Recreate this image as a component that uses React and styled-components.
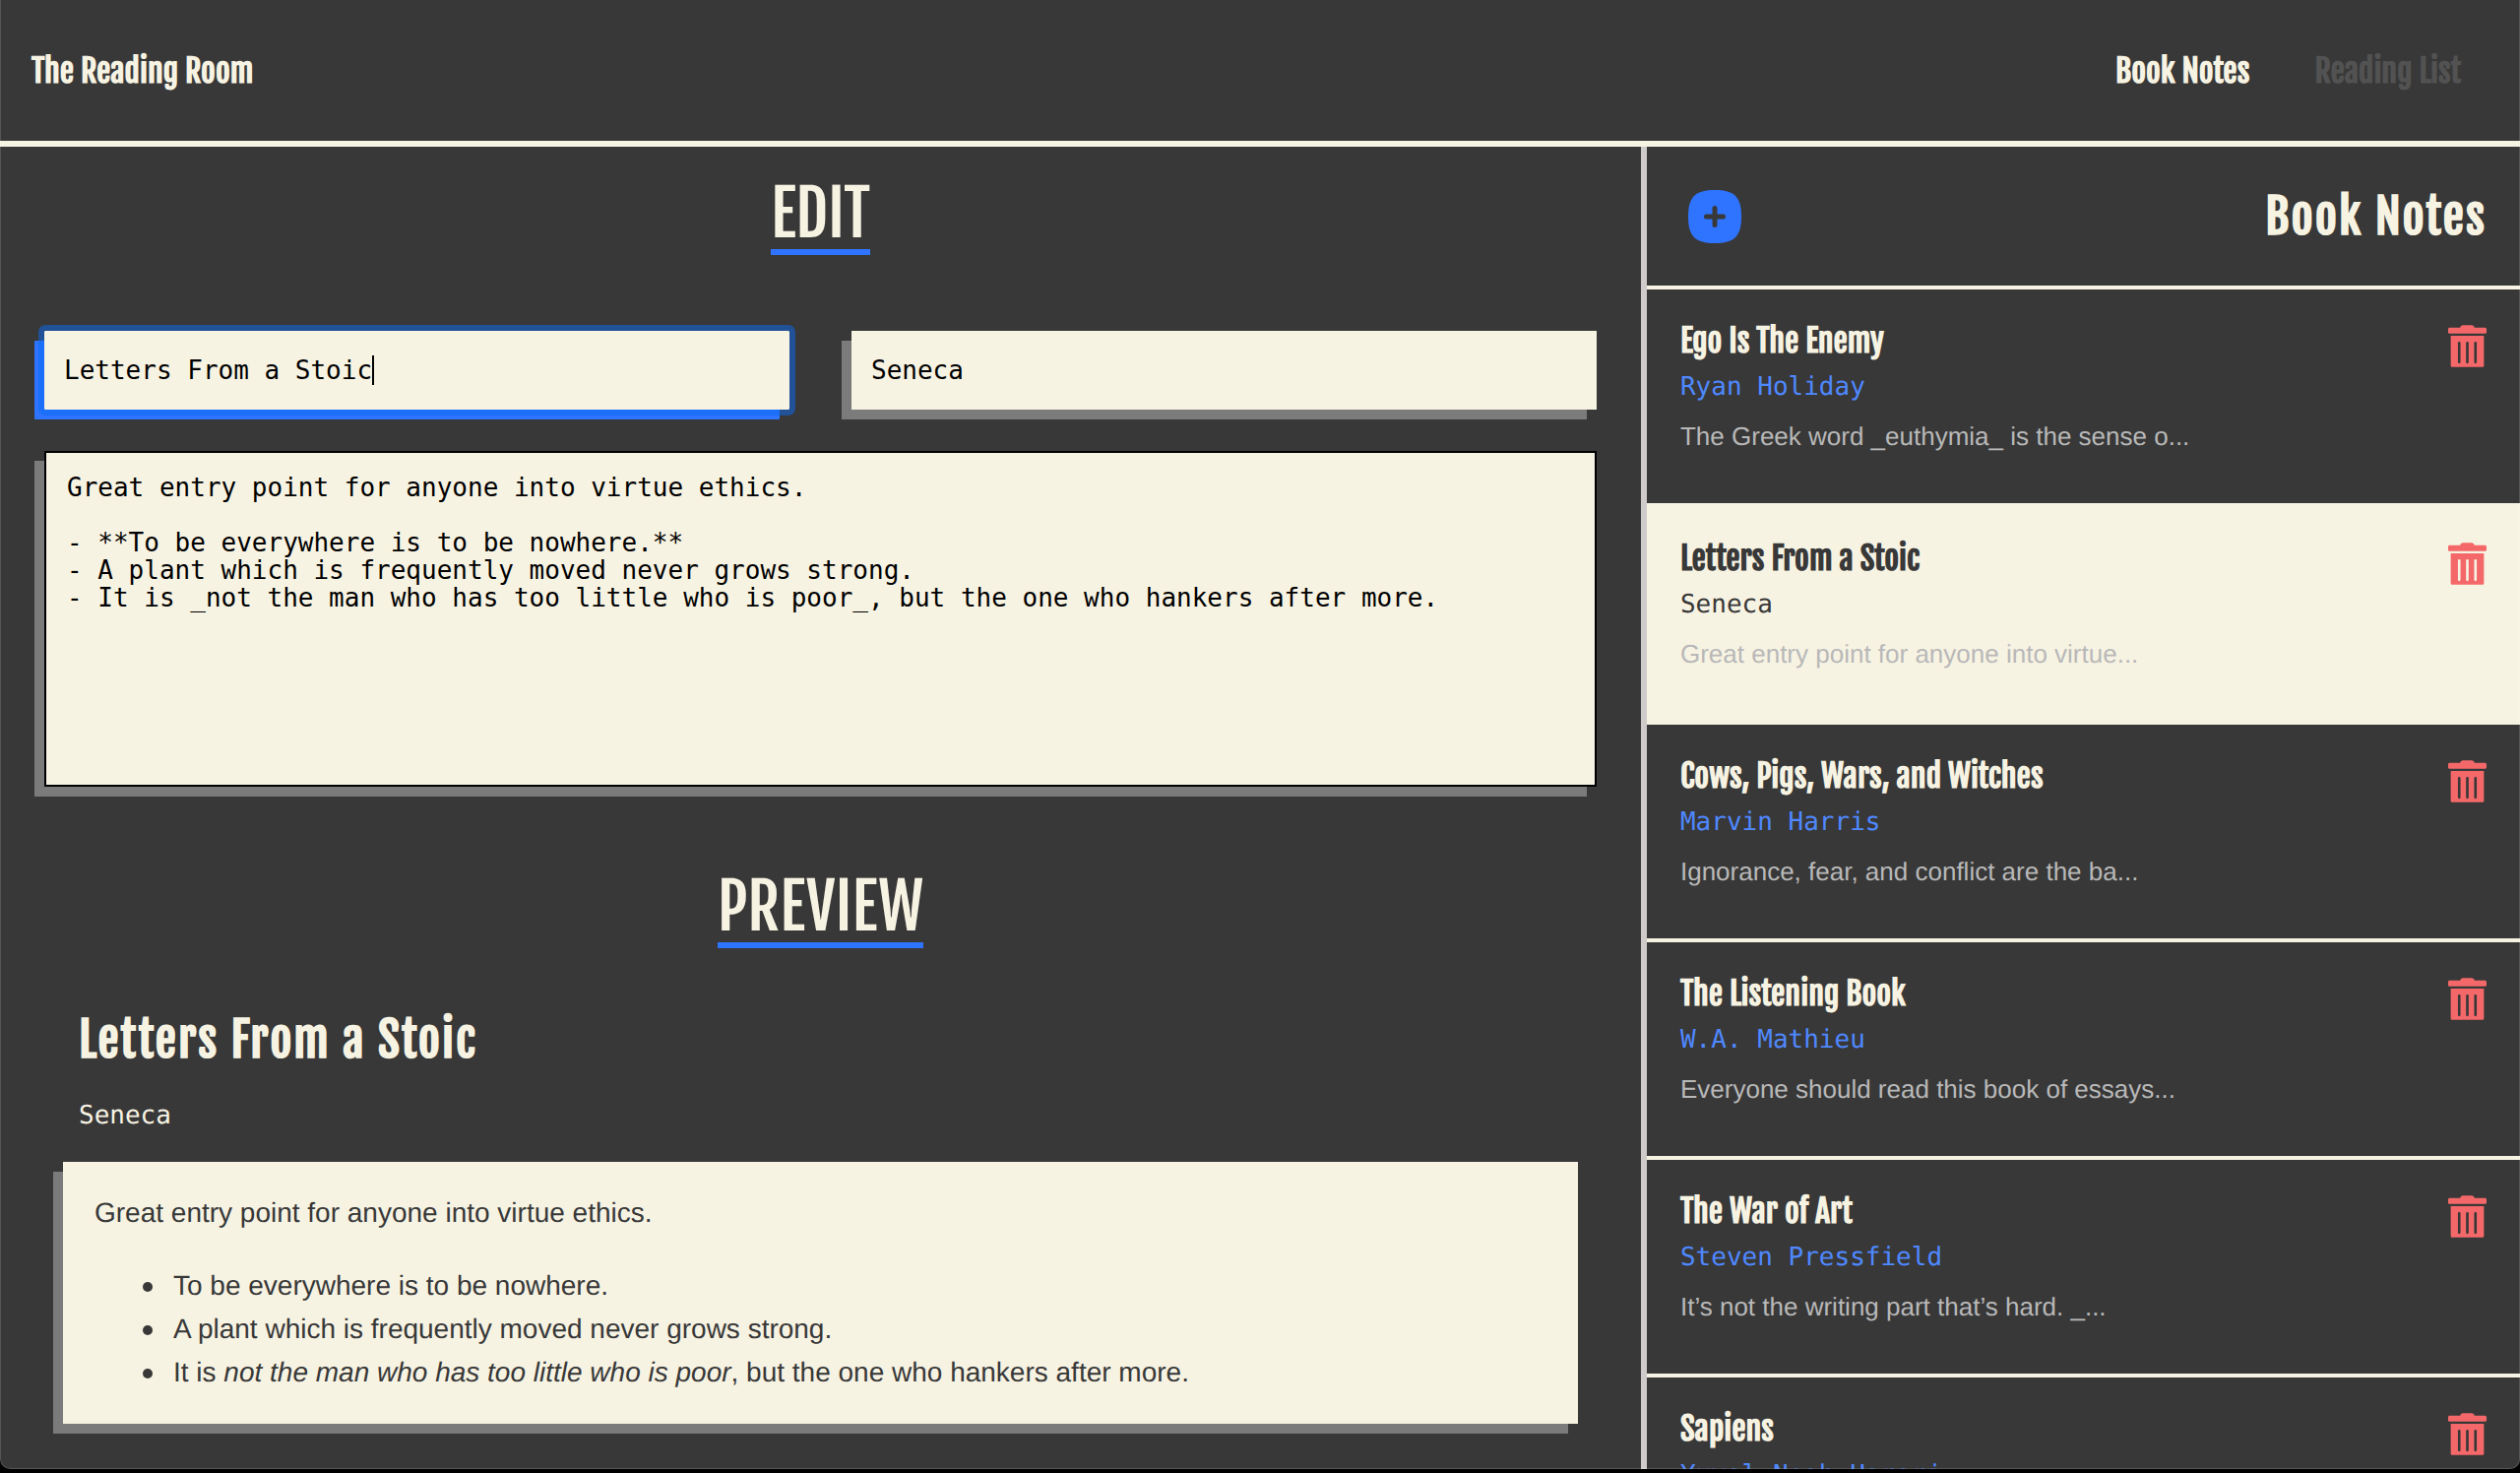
import React, { useLayoutEffect, useRef, useState } from "react";
import styled, { createGlobalStyle, ThemeProvider } from "styled-components";

const theme = {
  dark: "#383838",
  cream: "#f7f3e3",
  blue: "#2f74ff",
  lightBlue: "#4f88ff",
  red: "#f46869",
  shadow: "#7b7b7b",
  divider: "#cfcbcb",
  muted: "#b8b8b8",
  disabled: "#525252",
  display: `"Fjalla One", Oswald, "Liberation Sans", sans-serif`,
  mono: `Menlo, "DejaVu Sans Mono", "Liberation Mono", monospace`,
  body: `"Helvetica Neue", "Liberation Sans", Arial, sans-serif`,
};

const GlobalStyle = createGlobalStyle`
  *, *::before, *::after { box-sizing: border-box; }
  body {
    margin: 0;
    background: #000;
    color: ${theme.cream};
    font-family: ${theme.body};
    text-rendering: geometricPrecision;
    -webkit-font-smoothing: antialiased;
  }
  h1, h2, h3, p, ul { margin: 0; padding: 0; }
`;

const Window = styled.div`
  position: relative;
  display: flex;
  flex-direction: column;
  height: calc(100vh - 4px);
  overflow: hidden;
  border-radius: 0 0 10px 10px;
  background: ${({ theme }) => theme.dark};

  &::after {
    content: "";
    position: absolute;
    inset: 0;
    border: 1px solid rgba(255, 255, 255, 0.15);
    border-top: 0;
    border-radius: inherit;
    pointer-events: none;
  }
`;

const Header = styled.header`
  display: flex;
  flex: none;
  align-items: center;
  justify-content: space-between;
  min-height: 149px;
  padding: 0 60px 0 32px;
  border-bottom: 6px solid ${({ theme }) => theme.cream};
  font-family: ${({ theme }) => theme.display};
  font-size: 32px;
  font-weight: 700;
  line-height: 40px;
`;

const Nav = styled.nav`
  display: flex;
  gap: 66px;
`;

const NavLink = styled.a`
  color: ${({ theme, $active }) => ($active ? theme.cream : theme.disabled)};
  text-decoration: none;
`;

const Columns = styled.div`
  display: grid;
  flex: 1;
  grid-template-columns: minmax(0, 28fr) minmax(0, 15fr);
  min-height: 0;
`;

const Workspace = styled.main`
  display: flex;
  flex-direction: column;
  gap: 86px;
  padding-top: 32px;
  overflow: hidden;
`;

const Section = styled.section`
  display: flex;
  flex-direction: column;
  padding: 0 ${({ $inset }) => $inset}px;
`;

const SectionTitle = styled.h1`
  align-self: center;
  border-bottom: 6px solid ${({ theme }) => theme.blue};
  font-family: ${({ theme }) => theme.display};
  font-size: 64px;
  font-weight: 400;
  line-height: 72px;
  text-transform: uppercase;
`;

const Form = styled.form`
  display: grid;
  grid-template-columns: 1fr 1fr;
  gap: 42px 63px;
  margin-top: 77px;
`;

const FieldFrame = styled.div`
  position: relative;
  font-family: ${({ theme }) => theme.mono};
  font-size: 26px;
`;

const Caret = styled.span`
  position: absolute;
  top: 25px;
  width: 2px;
  height: 30px;
  background: #000;
  pointer-events: none;
`;

const TextField = styled.input`
  display: block;
  width: 100%;
  height: 80px;
  padding: 0 20px;
  border: 0;
  border-radius: 0;
  background: ${({ theme }) => theme.cream};
  box-shadow: -10px 10px 0 ${({ theme }) => theme.shadow};
  color: #000;
  caret-color: transparent;
  font: inherit;

  &:focus {
    border-radius: 1px;
    outline: 6px solid rgba(10, 105, 244, 0.5);
    box-shadow: -10px 10px 0 ${({ theme }) => theme.blue};
  }
`;

const NoteField = styled.textarea`
  display: block;
  grid-column: 1 / -1;
  height: 341px;
  padding: 21px;
  border: 2px solid #000;
  border-radius: 0;
  outline: 0;
  background: ${({ theme }) => theme.cream};
  box-shadow: -10px 10px 0 ${({ theme }) => theme.shadow};
  color: #000;
  font-family: ${({ theme }) => theme.mono};
  font-size: 26px;
  line-height: 28px;
  resize: none;
`;

const PreviewHead = styled.div`
  display: flex;
  flex-direction: column;
  gap: 32px;
  margin-top: 63px;
  padding: 0 16px 32px;
`;

const Title = styled.h2`
  font-family: ${({ theme }) => theme.display};
  font-size: 48px;
  font-weight: 700;
  letter-spacing: 2px;
  line-height: 60px;
`;

const Author = styled.p`
  color: ${({ theme, $tone }) => theme[$tone]};
  font-family: ${({ theme }) => theme.mono};
  font-size: 26px;
  line-height: 30px;
`;

const Paper = styled.article`
  padding: 30px 32px;
  background: ${({ theme }) => theme.cream};
  box-shadow: -10px 10px 0 ${({ theme }) => theme.shadow};
  color: ${({ theme }) => theme.dark};
  font-size: 28px;
  font-weight: 300;
  line-height: 44px;
`;

const Bullets = styled.ul`
  && {
    margin-top: 30px;
    padding-left: 80px;
  }
  list-style: none;
`;

const Bullet = styled.li`
  position: relative;

  &::before {
    content: "";
    position: absolute;
    top: 18px;
    left: -31px;
    width: 10px;
    height: 10px;
    border-radius: 50%;
    background: currentColor;
  }
`;

const Strong = styled.strong`
  font-weight: 500;
`;

const Sidebar = styled.aside`
  overflow: hidden;
  border-left: 6px solid ${({ theme }) => theme.divider};
`;

const SidebarHead = styled.div`
  display: flex;
  align-items: center;
  justify-content: space-between;
  min-height: 145px;
  padding: 0 34px 0 42px;
  border-bottom: 4px solid ${({ theme }) => theme.cream};
`;

const IconButton = styled.button`
  display: block;
  flex: none;
  padding: 0;
  border: 0;
  background: none;
  color: ${({ theme, $tone }) => theme[$tone]};
  cursor: pointer;

  svg { display: block; }
`;

const NoteList = styled.ul`
  list-style: none;
`;

const NoteItem = styled.li`
  display: flex;
  align-items: flex-start;
  justify-content: space-between;
  padding: 32px 34px 53px;
  border-bottom: 4px solid ${({ theme }) => theme.cream};
  background: ${({ theme, $selected }) => ($selected ? theme.cream : theme.dark)};
  color: ${({ theme, $selected }) => ($selected ? theme.dark : theme.cream)};

  ${IconButton} { margin-top: 4px; }
`;

const NoteTitle = styled.h3`
  && { margin-bottom: 12px; }
  font-family: ${({ theme }) => theme.display};
  font-size: 32px;
  font-weight: 700;
  line-height: 40px;
`;

const Excerpt = styled.p`
  && { margin-top: 20px; }
  color: ${({ theme }) => theme.muted};
  font-size: 26px;
  font-weight: 300;
  line-height: 30px;
`;

const AddIcon = () => (
  <svg width="54" height="54" viewBox="0 0 54 54" aria-hidden="true">
    <path
      fill="currentColor"
      d="M27 0C47 0 54 7 54 27S47 54 27 54 0 47 0 27 7 0 27 0Z"
    />
    <path
      d="M27 18.5v17M18.5 27h17"
      fill="none"
      stroke="#383838"
      strokeLinecap="round"
      strokeWidth="5"
    />
  </svg>
);

const TrashIcon = () => (
  <svg width="39" height="43" viewBox="0 0 118 129" aria-hidden="true">
    <g fill="currentColor">
      <path d="M37 8C38 3 41 0 46 0h26c5 0 8 3 9 8h32c3 0 5 2 5 5v9c0 3-2 4-5 4H5c-3 0-5-1-5-4v-9c0-3 2-5 5-5Z" />
      <path
        fillRule="evenodd"
        d="M8 33h102v91c0 3-2 5-5 5H13c-3 0-5-2-5-5Zm22 22v59a4 4 0 0 0 8 0V55a4 4 0 0 0-8 0Zm25 0v59a4 4 0 0 0 8 0V55a4 4 0 0 0-8 0Zm25 0v59a4 4 0 0 0 8 0V55a4 4 0 0 0-8 0Z"
      />
    </g>
  </svg>
);

const notes = [
  { title: "Ego Is The Enemy", author: "Ryan Holiday", excerpt: "The Greek word _euthymia_ is the sense o..." },
  { title: "Letters From a Stoic", author: "Seneca", excerpt: "Great entry point for anyone into virtue..." },
  { title: "Cows, Pigs, Wars, and Witches", author: "Marvin Harris", excerpt: "Ignorance, fear, and conflict are the ba..." },
  { title: "The Listening Book", author: "W.A. Mathieu", excerpt: "Everyone should read this book of essays..." },
  { title: "The War of Art", author: "Steven Pressfield", excerpt: "It’s not the writing part that’s hard. _..." },
  { title: "Sapiens", author: "Yuval Noah Harari", excerpt: "" },
];

const body = `Great entry point for anyone into virtue ethics.

- **To be everywhere is to be nowhere.**
- A plant which is frequently moved never grows strong.
- It is _not the man who has too little who is poor_, but the one who hankers after more.`;

function CaretField({ label, value, onChange, autoSelect }) {
  const ref = useRef(null);
  const [caret, setCaret] = useState(autoSelect ? value.length : null);

  useLayoutEffect(() => {
    if (!autoSelect) return;
    ref.current.focus();
    ref.current.setSelectionRange(value.length, value.length);
  }, []);

  return (
    <FieldFrame>
      <TextField
        ref={ref}
        aria-label={label}
        value={value}
        onChange={(e) => onChange(e.target.value)}
        onSelect={(e) => setCaret(e.target.selectionStart)}
        onBlur={() => setCaret(null)}
      />
      {caret !== null && <Caret style={{ left: `calc(20px + ${caret}ch)` }} />}
    </FieldFrame>
  );
}

export default function App() {
  const [title, setTitle] = useState("Letters From a Stoic");
  const [author, setAuthor] = useState("Seneca");
  const [text, setText] = useState(body);

  return (
    <ThemeProvider theme={theme}>
      <GlobalStyle />
      <Window>
        <Header>
          <NavLink href="#home" $active>The Reading Room</NavLink>
          <Nav>
            <NavLink href="#notes" $active>Book Notes</NavLink>
            <NavLink href="#list">Reading List</NavLink>
          </Nav>
        </Header>
        <Columns>
          <Workspace>
            <Section $inset={45}>
              <SectionTitle>Edit</SectionTitle>
              <Form>
                <CaretField label="Title" value={title} onChange={setTitle} autoSelect />
                <CaretField label="Author" value={author} onChange={setAuthor} />
                <NoteField aria-label="Notes" spellCheck={false} value={text} onChange={(e) => setText(e.target.value)} />
              </Form>
            </Section>
            <Section $inset={64}>
              <SectionTitle>Preview</SectionTitle>
              <PreviewHead>
                <Title>{title}</Title>
                <Author $tone="cream">{author}</Author>
              </PreviewHead>
              <Paper>
                <p>Great entry point for anyone into virtue ethics.</p>
                <Bullets>
                  <Bullet><Strong>To be everywhere is to be nowhere.</Strong></Bullet>
                  <Bullet>A plant which is frequently moved never grows strong.</Bullet>
                  <Bullet>It is <em>not the man who has too little who is poor</em>, but the one who hankers after more.</Bullet>
                </Bullets>
              </Paper>
            </Section>
          </Workspace>
          <Sidebar>
            <SidebarHead>
              <IconButton type="button" aria-label="Add note" $tone="blue"><AddIcon /></IconButton>
              <Title>Book Notes</Title>
            </SidebarHead>
            <NoteList>
              {notes.map((note, i) => (
                <NoteItem key={note.title} $selected={i === 1}>
                  <div>
                    <NoteTitle>{note.title}</NoteTitle>
                    <Author $tone={i === 1 ? "dark" : "lightBlue"}>{note.author}</Author>
                    {note.excerpt && <Excerpt>{note.excerpt}</Excerpt>}
                  </div>
                  <IconButton type="button" aria-label={`Delete ${note.title}`} $tone="red"><TrashIcon /></IconButton>
                </NoteItem>
              ))}
            </NoteList>
          </Sidebar>
        </Columns>
      </Window>
    </ThemeProvider>
  );
}
